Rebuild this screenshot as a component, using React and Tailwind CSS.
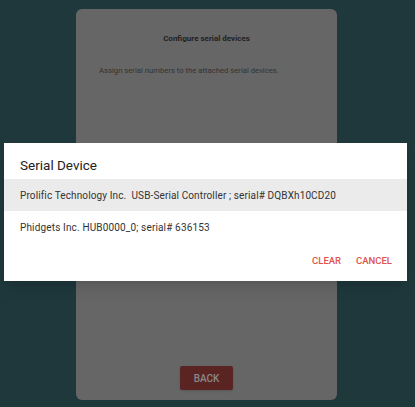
export default function App() {
  return (
    <div className="relative w-[415px] h-[407px] overflow-hidden bg-[#1e383c] font-['Roboto',sans-serif]">
      {/* page card (dimmed by scrim) */}
      <div className="ml-[76px] mt-[9px] w-[261px] h-[391px] rounded-[6px] bg-[#666666] flex flex-col items-center">
        <div className="mt-[24px] text-[8px] font-bold text-[#222]">Configure serial devices</div>
        <div className="self-start ml-[23px] mt-[20px] text-[7.7px] text-[#333]">
          Assign serial numbers to the attached serial devices.
        </div>
        <div className="mt-auto mb-[10px] w-[53px] h-[24px] rounded-[2px] bg-[#5a2422] shadow-sm flex items-center justify-center text-[10px] font-medium text-[#8a8a8a]">
          BACK
        </div>
      </div>

      {/* dialog */}
      <div className="absolute left-[4px] top-[143px] w-[403px] h-[138px] bg-white shadow-lg flex flex-col">
        <div className="pl-[16px] pt-[12px] h-[36px] text-[13.5px] text-[#222]">Serial Device</div>
        <div className="h-[32px] bg-[#ebebeb] pl-[16px] flex items-center text-[10px] tracking-[0.12px] text-[#333]">
          Prolific Technology Inc.&nbsp; USB-Serial Controller ; serial# DQBXh10CD20
        </div>
        <div className="h-[32px] pl-[16px] flex items-center text-[10px] tracking-[0.15px] text-[#333]">
          Phidgets Inc. HUB0000_0; serial# 636153
        </div>
        <div className="flex justify-end gap-[15px] pr-[15px] mt-[11px] text-[9.5px] font-medium text-[#e0524b]">
          <span>CLEAR</span>
          <span>CANCEL</span>
        </div>
      </div>
    </div>
  );
}
